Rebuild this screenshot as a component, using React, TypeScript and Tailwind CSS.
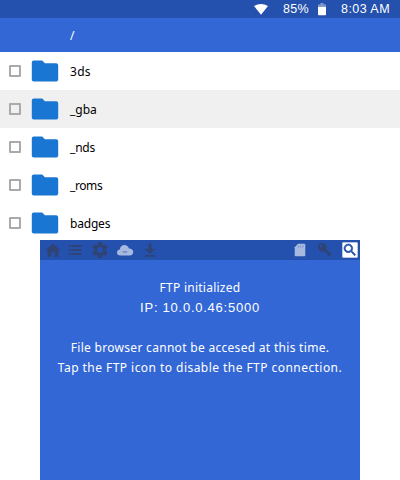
import React from 'react';
import { MdSettings, MdSearch } from 'react-icons/md';

const files = [
  { name: '3ds', text: 'tracking-[0.3px]' },
  { name: '_gba', text: 'tracking-[0px]' },
  { name: '_nds', text: 'tracking-[-0.2px]' },
  { name: '_roms', text: 'tracking-[-0.4px]' },
  { name: 'badges', text: 'tracking-[-0.2px]' },
];

function Folder() {
  return (
    <svg width="28" height="24" viewBox="0 0 28 24" className="shrink-0">
      <path
        d="M2.800 1.500h8.400l2.700 2.700H25.200Q27.200 4.200 27.200 6.200V20.500q0 2-2 2H2.800q-2 0-2-2V3.500q0-2 2-2z"
        fill="#1976d2"
      />
    </svg>
  );
}

function StatusBar() {
  return (
    <div className="flex h-[18px] items-center bg-[#2450ae] pl-[253px] font-['Liberation_Sans',Arial,sans-serif] text-[12.5px] text-white">
      <svg width="16" height="12" viewBox="0 0 16 12" className="shrink-0">
        <path d="M1 3Q8-1 15 3L8 11.800z" fill="#fff" />
      </svg>
      <span className="ml-[14px] w-[34px] tracking-[0.3px]">85%</span>
      <svg width="10" height="14" viewBox="0 0 10 14" className="shrink-0">
        <path d="M3.500 1h3v1.500H9V5H1V2.500h2.500z" fill="#8299cf" />
        <path d="M1 5h8v7.500q0 .8-.8.8H1.800q-.8 0-.8-.8z" fill="#fff" />
      </svg>
      <span className="ml-[14px] tracking-[0.45px]">8:03 AM</span>
    </div>
  );
}

function Toolbar() {
  return (
    <div className="flex h-5 items-center bg-[#2450ae] pl-[5px] pr-[2px] text-[#2f4374]">
      <svg width="16" height="16" viewBox="0 0 16 16" fill="currentColor">
        <path d="M8 1.500L15.500 8.500H13.300V14.800H9.700V10.200H6.300V14.800H2.700V8.500H.5z" />
      </svg>
      <svg width="14" height="14" viewBox="0 0 14 14" className="ml-[7px]" fill="currentColor">
        <path d="M.5 2h2v2h-2zM3.500 2H13.500v2H3.500zM.5 6h2v2h-2zM3.500 6H13.500v2H3.500zM.5 10h2v2h-2zM3.500 10H13.500v2H3.500z" />
      </svg>
      <MdSettings size={20} className="ml-[8px]" />
      <svg width="18" height="14" viewBox="0 0 18 14" className="ml-[6px]">
        <path
          d="M4.500 12.500C2.200 12.500 1 11.200 1 9.500 1 7.800 2.200 6.700 3.800 6.500 4.200 3.700 6 2 8.300 2c2.300 0 4 1.400 4.700 3.600 2.600 0 4.200 1.400 4.200 3.500 0 2-1.300 3.400-3.500 3.400z"
          fill="#a7b9df"
        />
        <path d="M6.700 8.300h4.500v1.200H6.700z" fill="#5f7dbf" />
      </svg>
      <svg width="12" height="16" viewBox="0 0 12 16" className="ml-[10px]" fill="currentColor">
        <path d="M4.500 1.500h3v5.300h3.700L6 12 .8 6.800h3.700zM1 13h10v1.700H1z" />
      </svg>
      <svg width="12" height="14" viewBox="0 0 12 14" className="ml-auto mr-[2px]">
        <path d="M4 .8h6.300q1 0 1 1v10.500q0 1-1 1H1.700q-1 0-1-1V4.200z" fill="#a7b9df" />
        <path d="M4.500 2.500v2M6.700 2.500v2M8.900 2.500v2" stroke="#7990c8" strokeWidth="1" />
      </svg>
      <svg width="16" height="16" viewBox="0 0 16 16" className="ml-[9px]">
        <path d="M7 7l6.500 6.300M10 11l1-1" stroke="currentColor" strokeWidth="3" />
        <circle cx="5.300" cy="5.300" r="4.300" fill="currentColor" />
        <circle cx="4" cy="4" r="1.200" fill="#2450ae" />
      </svg>
      <div className="ml-[9px] flex h-4 w-4 items-center justify-center rounded-[1px] bg-white text-[#2450ae]">
        <MdSearch size={16} className="stroke-current stroke-1" />
      </div>
    </div>
  );
}

export default function App() {
  return (
    <div className="h-[480px] w-[400px] overflow-hidden whitespace-pre bg-white font-['Noto_Sans',sans-serif] text-[12px] leading-5">
      <div className="h-60">
        <StatusBar />
        <div className="flex h-[34px] items-center bg-[#3367d6] pl-[70px] pt-px text-white">/</div>
        {files.map((file, i) => (
          <div
            key={file.name}
            className={`flex h-[38px] items-center pl-[9px] text-black ${i === 1 ? 'bg-[#f0f0f0]' : ''}`}
          >
            <div className="h-3 w-3 shrink-0 rounded-[1px] border-2 border-[#aaa]" />
            <div className="ml-[10px] flex w-[39px]">
              <Folder />
            </div>
            <span className={`pt-px ${file.text}`}>{file.name}</span>
          </div>
        ))}
      </div>
      <div className="mx-10 h-60 bg-[#3367d6] text-white">
        <Toolbar />
        <div className="flex flex-col items-center pt-[18px]">
          <div className="tracking-[0.25px]">FTP initialized</div>
          <div className="font-['Liberation_Sans',Arial,sans-serif] text-[13px] tracking-[0.75px]">IP: 10.0.0.46:5000</div>
          <div className="h-5" />
          <div className="tracking-[0.3px]">File browser cannot be accesed at this time.</div>
          <div className="tracking-[0.45px]">Tap the FTP icon to disable the FTP connection.</div>
        </div>
      </div>
    </div>
  );
}
